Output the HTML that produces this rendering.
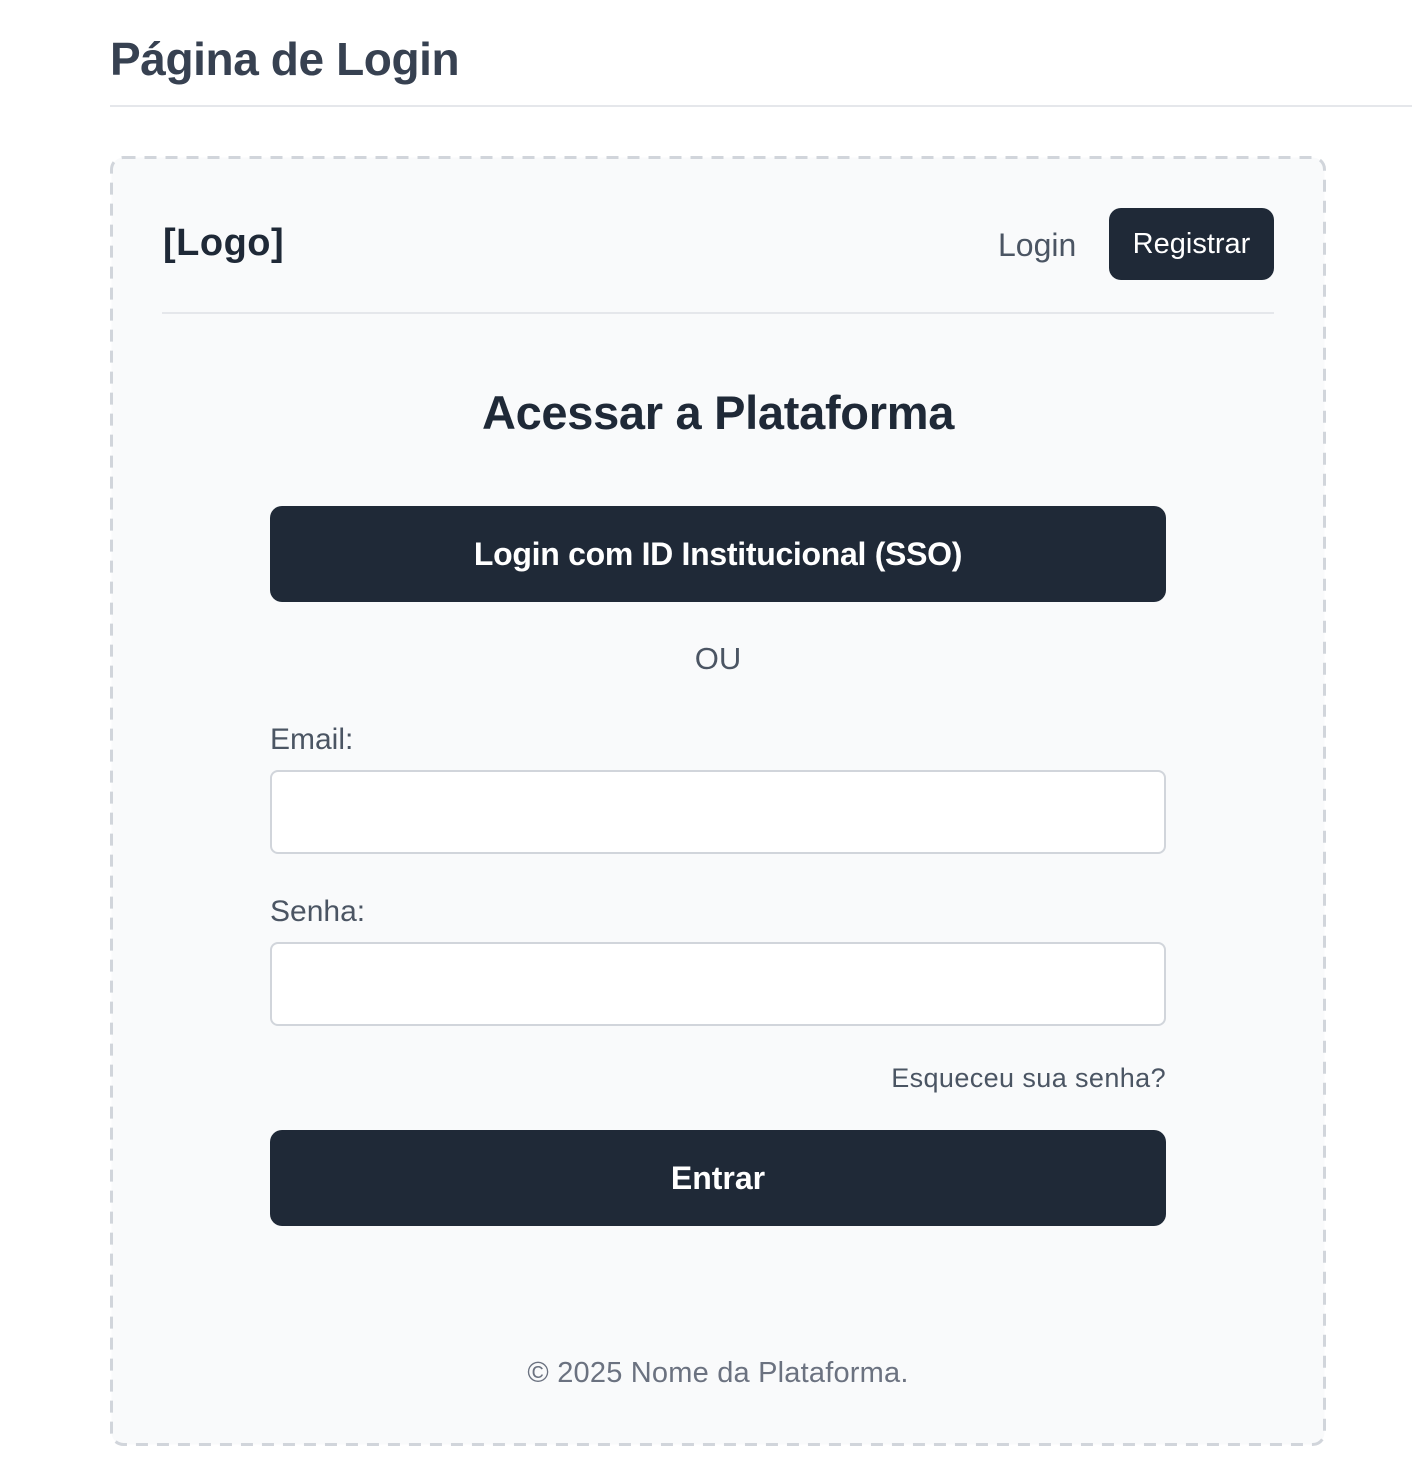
<!DOCTYPE html>
<html><head><meta charset="utf-8"><style>
*{box-sizing:border-box;margin:0;padding:0}
body{width:1412px;height:1478px;background:#fff;font-family:"Liberation Sans",sans-serif;position:relative;overflow:hidden}
.a{position:absolute}
h1{position:absolute;left:110px;top:32px;font-size:46px;font-weight:bold;color:#374151;letter-spacing:-0.4px}
.hr{left:110px;top:105px;width:1302px;height:2px;background:#e5e7eb}
.btn{background:#1f2937;color:#fff;border-radius:12px;font-weight:bold;display:flex;align-items:center;justify-content:center}
.inp{background:#fff;border:2px solid #d1d5db;border-radius:8px;left:270px;width:896px;height:84px}
.lbl{font-size:30px;color:#4b5563}
</style></head><body>
<h1>Página de Login</h1>
<div class="a hr"></div>
<svg class="a" style="left:110px;top:156px" width="1216" height="1290"><rect x="1.5" y="1.5" width="1213" height="1287" rx="12" fill="#f9fafb" stroke="#d1d5db" stroke-width="3" stroke-dasharray="12 9"/></svg>
<div class="a" style="left:163px;top:222px;font-size:38px;font-weight:bold;color:#1f2937;letter-spacing:0.5px">[Logo]</div>
<div class="a" style="left:998px;top:227px;font-size:32px;color:#4b5563">Login</div>
<div class="a btn" style="left:1109px;top:208px;width:165px;height:72px;font-weight:normal;font-size:29px">Registrar</div>
<div class="a" style="left:162px;top:312px;width:1112px;height:2px;background:#e5e7eb"></div>
<div class="a" style="left:110px;width:1216px;top:385px;text-align:center;font-size:47px;font-weight:bold;color:#1f2937;letter-spacing:-0.3px">Acessar a Plataforma</div>
<div class="a btn" style="left:270px;top:506px;width:896px;height:96px;font-size:32px;letter-spacing:-0.3px">Login com ID Institucional (SSO)</div>
<div class="a" style="left:110px;width:1216px;top:641px;text-align:center;font-size:31px;color:#4b5563">OU</div>
<div class="a lbl" style="left:270px;top:723px">Email:</div>
<div class="a inp" style="top:770px"></div>
<div class="a lbl" style="left:270px;top:895px">Senha:</div>
<div class="a inp" style="top:942px"></div>
<div class="a" style="left:770px;width:396px;top:1063px;text-align:right;font-size:27px;color:#4b5563;letter-spacing:0.4px">Esqueceu sua senha?</div>
<div class="a btn" style="left:270px;top:1130px;width:896px;height:96px;font-size:32px">Entrar</div>
<div class="a" style="left:110px;width:1216px;top:1357px;text-align:center;font-size:29px;color:#6b7280;letter-spacing:0.2px">© 2025 Nome da Plataforma.</div>
</body></html>
